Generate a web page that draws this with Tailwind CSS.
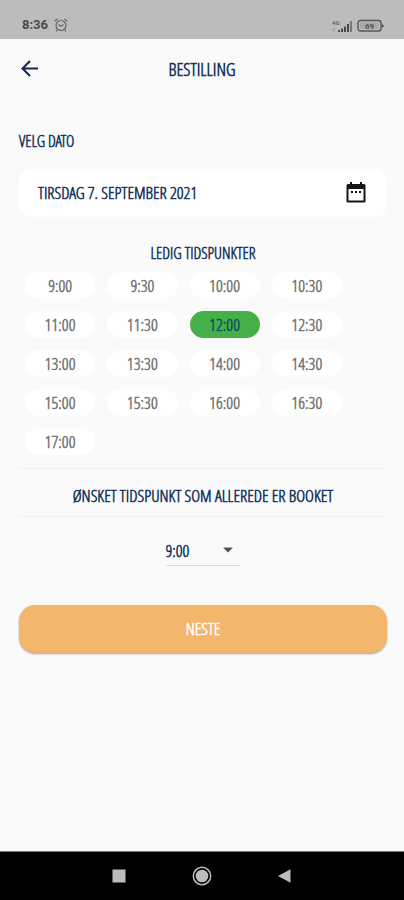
<!DOCTYPE html>
<html lang="no">
<head>
<meta charset="utf-8">
<meta name="viewport" content="width=device-width, initial-scale=1">
<title>Bestilling</title>
<script src="https://cdn.jsdelivr.net/npm/@tailwindcss/browser@4"></script>
</head>
<body class="flex min-h-screen flex-col bg-[#fafafa] font-['Open_Sans_Condensed_Light','Open_Sans_Condensed','Roboto_Condensed',sans-serif] text-lg leading-5 font-bold text-[#17375e]">
  <div class="flex h-[39px] items-end justify-between bg-[#bcbcbc] pr-5 pb-[6px] pl-[22px] text-[#4a4a4a]">
    <div class="flex items-center gap-[6px]">
      <span class="font-[Roboto,sans-serif] text-[13px] leading-4 font-bold">8:36</span>
      <svg class="size-[14px]" viewBox="0 0 14 14" fill="none" stroke="#666" stroke-width="1.2" stroke-linecap="round"><circle cx="7" cy="7.5" r="5"/><path d="M1 3 3.2 1.2M13 3 10.8 1.2M4.800 6.800 7 8.300 9.200 6.800M3.300 11.500 2.300 13M10.700 11.500 11.700 13"/></svg>
    </div>
    <div class="flex items-center gap-1">
      <svg class="h-[14px] w-[22px]" viewBox="0 0 22 14" fill="#4a4a4a"><text x="1" y="6" font-family="Roboto, sans-serif" font-size="6" font-weight="700" fill="#666">4G</text><path d="M1 12.500 3 8.500 4 9 2.500 12.500Z" fill="#999"/><rect x="7" y="11" width="2" height="2"/><rect x="10" y="9.500" width="2" height="3.500"/><rect x="13" y="7.500" width="2" height="5.500"/><rect x="16" y="5" width="2" height="8"/><rect x="19" y="2" width="2" height="11" fill="#777"/></svg>
      <svg class="h-[14px] w-[27px]" viewBox="0 0 27 14"><rect x="1" y="1.500" width="23" height="10.500" rx="2.500" fill="none" stroke="#555" stroke-width="1.400"/><rect x="3" y="3.500" width="19" height="6.500" rx="1" fill="#a8a8a8"/><path d="M25 4.500 27 7 25 9.500Z" fill="#555"/><text x="8" y="9.500" font-family="Roboto, sans-serif" font-size="8" font-weight="700" fill="#555">69</text></svg>
    </div>
  </div>

  <header class="grid h-[60px] grid-cols-[24px_1fr_24px] items-center px-[18px]">
    <button type="button" aria-label="Tilbake"><svg class="size-6" viewBox="0 0 24 24" fill="none" stroke="#17244f" stroke-width="2"><path d="M20 11.500H4.500M12 4 4.500 11.500 12 19"/></svg></button>
    <h1 class="text-center text-lg font-bold">BESTILLING</h1>
  </header>

  <main class="flex flex-1 flex-col pt-8 pr-[17px] pl-[19px]">
    <label for="dato" class="text-base leading-5">VELG DATO</label>
    <div class="mt-[18px] flex h-12 items-center rounded-xl bg-white px-[19px]">
      <input id="dato" type="text" readonly value="TIRSDAG 7. SEPTEMBER 2021" class="min-w-0 flex-1 bg-transparent text-[17px] outline-none">
      <button type="button" aria-label="Åpne kalender"><svg class="size-6" viewBox="0 0 24 24" fill="#151515"><path fill-rule="evenodd" d="M6 1h2v2h8V1h2v2h2a1.500 1.500 0 0 1 1.500 1.500v15.500a1.500 1.500 0 0 1-1.500 1.500H4a1.500 1.500 0 0 1-1.500-1.500V4.500A1.500 1.500 0 0 1 4 3h2ZM4.500 8V19.500h15V8Z"/><path d="M7 10h2v2H7zM11 10h2v2h-2zM15 10h2v2h-2z"/></svg></button>
    </div>

    <h2 class="mt-[26px] text-center text-base leading-5 font-bold">LEDIG TIDSPUNKTER</h2>
    <div class="mt-[9px] grid grid-cols-4 gap-3 pr-[45px] pl-[6px] text-[17px] text-[#777]">
      <button type="button" class="h-[27px] rounded-full bg-white">9:00</button>
      <button type="button" class="h-[27px] rounded-full bg-white">9:30</button>
      <button type="button" class="h-[27px] rounded-full bg-white">10:00</button>
      <button type="button" class="h-[27px] rounded-full bg-white">10:30</button>
      <button type="button" class="h-[27px] rounded-full bg-white">11:00</button>
      <button type="button" class="h-[27px] rounded-full bg-white">11:30</button>
      <button type="button" aria-pressed="true" class="h-[27px] rounded-full bg-[#45b04a] text-[#17505e]">12:00</button>
      <button type="button" class="h-[27px] rounded-full bg-white">12:30</button>
      <button type="button" class="h-[27px] rounded-full bg-white">13:00</button>
      <button type="button" class="h-[27px] rounded-full bg-white">13:30</button>
      <button type="button" class="h-[27px] rounded-full bg-white">14:00</button>
      <button type="button" class="h-[27px] rounded-full bg-white">14:30</button>
      <button type="button" class="h-[27px] rounded-full bg-white">15:00</button>
      <button type="button" class="h-[27px] rounded-full bg-white">15:30</button>
      <button type="button" class="h-[27px] rounded-full bg-white">16:00</button>
      <button type="button" class="h-[27px] rounded-full bg-white">16:30</button>
      <button type="button" class="h-[27px] rounded-full bg-white">17:00</button>
    </div>

    <label for="booket" class="mt-[13px] border-y border-[#f0f0f0] pt-[17px] pb-[10px] text-center text-[17px] leading-5">ØNSKET TIDSPUNKT SOM ALLEREDE ER BOOKET</label>
    <div class="relative mt-5 w-[75px] self-center border-b border-[#dcdcdc]">
      <select id="booket" class="block h-7 w-full appearance-none bg-transparent text-[17px] outline-none"><option>9:00</option></select>
      <svg class="pointer-events-none absolute top-2 right-2 size-[10px]" viewBox="0 0 10 10" fill="#555"><path d="M0 2.500h10L5 7.500Z"/></svg>
    </div>

    <button type="button" class="mt-[39px] h-12 rounded-2xl bg-[#f4b56c] text-[17px] text-white shadow-[0_1px_2px_rgba(0,0,0,0.35)]">NESTE</button>
  </main>

  <nav class="flex h-[49px] items-center justify-center gap-[63px] border-t border-[#777] bg-black" aria-label="System">
    <button type="button" aria-label="Siste apper"><svg class="size-5" viewBox="0 0 20 20"><rect x="3.500" y="3.500" width="13" height="13" fill="#bcbcbc"/></svg></button>
    <button type="button" aria-label="Hjem"><svg class="size-5" viewBox="0 0 20 20"><circle cx="10" cy="10" r="8.700" fill="none" stroke="#bcbcbc" stroke-width="1.500"/><circle cx="10" cy="10" r="6.300" fill="#bcbcbc"/></svg></button>
    <button type="button" aria-label="Tilbake"><svg class="size-5" viewBox="0 0 20 20"><path d="M3 10 15.500 3.200V16.800Z" fill="#bcbcbc"/></svg></button>
  </nav>
</body>
</html>
